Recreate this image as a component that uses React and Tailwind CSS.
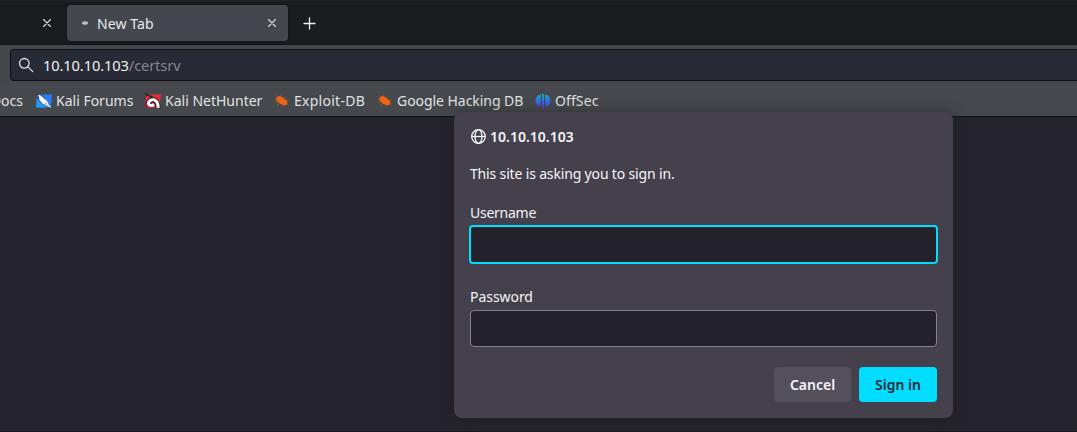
import React from "react";

function Cross({ className }) {
  return (
    <svg className={className} width="8" height="8" viewBox="0 0 8 8" fill="none" stroke="#dcdde0" strokeWidth="1.1" strokeLinecap="round">
      <path d="M0.5 0.5 7.5 7.5M7.5 0.5 0.5 7.5" />
    </svg>
  );
}

function ForumsIcon() {
  return (
    <svg width="16" height="16" viewBox="0 0 16 16" className="shrink-0">
      <path d="M1 1.5H16L15 14.5H0Z" fill="#267df5" />
      <path d="M0 14.5 1 6l10 8.5Z" fill="#1c9cf2" />
      <path d="M0.3 .8 3.2 2.4M2.4 2.6 2.2 5.2 5.4 9.6 10 12.4 15.4 15.4" fill="none" stroke="#25354c" strokeWidth="1.3" />
      <path d="M2 1.6 4.4 2.4 7.4 4.6 11.4 8.6 12.6 11.4 15.8 15.2 10.8 13 6 10.2 3.2 6.8 3 4.2Z" fill="#f4f4f4" />
      <path d="M4.6 1.2 6.8 3.8 9 5.8M9.4 10 11 11.6" fill="none" stroke="#25354c" strokeWidth=".8" />
    </svg>
  );
}

function NetHunterIcon() {
  return (
    <svg width="16" height="16" viewBox="0 0 16 16" className="shrink-0">
      <path d="M1.5 1.5H16L14.5 14.5H0Z" fill="#ef2938" />
      <path d="M0 14.5 .8 6l8 8.5Z" fill="#ad1430" />
      <path d="M0.3 0.8 4 2.8 6.8 3.6 5 5.5" fill="none" stroke="#24252b" strokeWidth="1.6" />
      <path d="M13 14.4C13 10.6 11.2 7.4 8.6 6.8 6 6.8 3.4 9 3.8 10.8" fill="none" stroke="#24252b" strokeWidth="5.2" />
      <path d="M13.2 14.8C13.2 11 11.6 7.6 8.7 6.8 6.2 6.4 3.4 8.6 3.4 10.4 3.8 12.6 6.4 13 9 11.6" fill="none" stroke="#fff" strokeWidth="3" />
      <path d="M5.8 10.2C7 8.8 8.6 8.8 9.6 10.2" fill="none" stroke="#24252b" strokeWidth="1.2" />
    </svg>
  );
}

function BugIcon() {
  return (
    <svg width="16" height="16" viewBox="0 0 16 16" className="shrink-0">
      <path d="M3 4.2C4.4 2.6 7.2 3.2 9.5 5L12.8 7.8 13.6 10.6 11.5 12.4C8.5 12.4 5.4 11 3.5 8.6L2 6.2Z" fill="#ef6412" />
      <path d="M3.5 4 2.3 2.3M6 4.2 6.4 2.2M9.5 5.4 11.2 3.6M11.5 7.4 14.8 6.8M3 6 0.5 5.8M4 8.5 0.8 9.2M6 10.2 3 12.2M9 11.5 8.5 13.5M12.5 10.5 14.5 12.8" stroke="#ef6412" strokeWidth=".65" opacity=".75" />
    </svg>
  );
}

function OffSecIcon() {
  return (
    <svg width="16" height="16" viewBox="0 0 16 16" className="shrink-0">
      <defs>
        <linearGradient id="wing" x1="0" y1="0" x2="0" y2="1">
          <stop offset="0" stopColor="#20a6c4" />
          <stop offset=".5" stopColor="#2e70dd" />
          <stop offset="1" stopColor="#602ee8" />
        </linearGradient>
      </defs>
      <path fill="url(#wing)" d="M7 1H9V12.5L8.6 15.8H7.4L7 12.5ZM5.9 1.2C2.8 2 .5 4.6.5 8c0 2.6 1.4 4.7 3.6 5.8L5.2 12.8 5.9 11ZM10.1 1.2C13.2 2 15.5 4.6 15.5 8c0 2.6-1.4 4.7-3.6 5.8L10.8 12.8 10.1 11Z" />
    </svg>
  );
}

function Bookmark({ icon, label, className }) {
  return (
    <div className={`flex shrink-0 items-center gap-1 ${className}`}>
      {icon}
      <span className="leading-5">{label}</span>
    </div>
  );
}

function TabStrip() {
  return (
    <div className="flex h-[45px] items-start border-t border-b border-t-[#20242a] border-b-[#111317] bg-[#1b1c20] pt-1">
      <div className="flex h-9 w-[67px] shrink-0 items-center pl-[43px]"><Cross /></div>
      <div className="flex h-9 w-[221px] shrink-0 items-center rounded bg-[#45474e] pr-[12px] pl-[15px] shadow-[0_0_3px_rgba(0,0,0,0.4)]">
        <svg width="6" height="4" viewBox="0 0 6 4"><ellipse cx="3" cy="2" rx="3" ry="1.8" fill="#bdbfc2" /></svg>
        <span className="ml-[9px] flex-1 pt-[2px] tracking-[0.1px] text-[#e8e9ea]">New Tab</span>
        <Cross />
      </div>
      <svg className="mt-3 ml-[15px]" width="13" height="13" viewBox="0 0 13 13" stroke="#f0f0f1" strokeWidth="1.3" strokeLinecap="round">
        <path d="M6.5 1V12M1 6.5H12" />
      </svg>
    </div>
  );
}

function AddressBar() {
  return (
    <div className="flex h-[40px] bg-[#45474c] pt-1 pb-1 pl-[10px]">
      <div className="flex h-8 flex-1 items-center rounded-l border border-r-0 border-[#0e0f13] bg-[#282a36] pl-[7px]">
        <svg width="16" height="16" viewBox="0 0 16 16" fill="none" stroke="#e0e1e3" strokeWidth="1.3" strokeLinecap="round">
          <circle cx="6.3" cy="6.3" r="4.8" />
          <path d="m9.9 9.9 4.9 4.7" />
        </svg>
        <span className="ml-[9px] pb-px text-[14.67px] tracking-[-0.12px] text-[#f0f0f1]">10.10.10.103<span className="text-[#85868d]">/certsrv</span></span>
      </div>
    </div>
  );
}

function SignInDialog() {
  return (
    <form className="absolute top-[112px] left-[454px] flex h-[306px] w-[499px] flex-col rounded-lg bg-[#44414d] px-4 pt-[15px] text-[#f5f5f7] shadow-[0_2px_14px_rgba(32,32,32,0.75)]" onSubmit={(e) => e.preventDefault()}>
      <div className="flex h-5 items-center gap-[3px] pl-px font-semibold">
        <svg width="16" height="16" viewBox="0 0 16 16" fill="none" stroke="#f5f5f7" strokeWidth="1.3" className="shrink-0">
          <circle cx="7.5" cy="7.5" r="6.8" />
          <ellipse cx="7.5" cy="7.5" rx="3.5" ry="6.8" />
          <path d="M1 7.5H14" />
        </svg>
        <span>10.10.10.103</span>
      </div>
      <p className="mt-[17px] h-5 leading-5 tracking-[-0.16px]">This site is asking you to sign in.</p>
      <label className="mt-[19px] h-5 leading-5 tracking-[-0.25px]" htmlFor="username">Username</label>
      <input id="username" className="-mx-px mt-[2px] h-[39px] shrink-0 rounded border-2 border-[#00ddff] bg-[#23222b] px-2 outline-none" />
      <label className="mt-[23px] h-5 leading-5 tracking-[-0.05px]" htmlFor="password">Password</label>
      <input id="password" type="password" className="mt-[3px] h-[37px] shrink-0 rounded border border-[#86848b] bg-[#23222b] px-2 outline-none" />
      <div className="mt-5 flex justify-end gap-2 font-semibold">
        <button type="button" className="h-[35px] w-[77px] rounded bg-[#53505c]">Cancel</button>
        <button type="submit" className="h-[35px] w-[78px] rounded bg-[#00ddff] text-[#2b2a33]">Sign in</button>
      </div>
    </form>
  );
}

export default function App() {
  return (
    <div className="relative flex h-[432px] w-[1077px] flex-col overflow-hidden bg-[#25232c] font-['Noto_Sans',sans-serif] text-[14px] leading-5">
      <TabStrip />
      <AddressBar />
      <div className="flex h-8 shrink-0 items-start border-b border-[#0e0f13] bg-[#45484d] pt-[6px] text-[#e1e2e3]">
        <div className="flex w-[36px] shrink-0 justify-end pr-[13px]"><span>Docs</span></div>
        <Bookmark icon={<ForumsIcon />} label="Kali Forums" className="w-[109px]" />
        <Bookmark icon={<NetHunterIcon />} label="Kali NetHunter" className="w-[129px]" />
        <Bookmark icon={<BugIcon />} label="Exploit-DB" className="w-[103px] tracking-[0.27px]" />
        <Bookmark icon={<BugIcon />} label="Google Hacking DB" className="w-[158px] tracking-[-0.05px]" />
        <Bookmark icon={<OffSecIcon />} label="OffSec" className="w-[80px] tracking-[0.1px]" />
      </div>
      <div className="flex-1 border-b border-[#1c1b22]" />
      <SignInDialog />
    </div>
  );
}
